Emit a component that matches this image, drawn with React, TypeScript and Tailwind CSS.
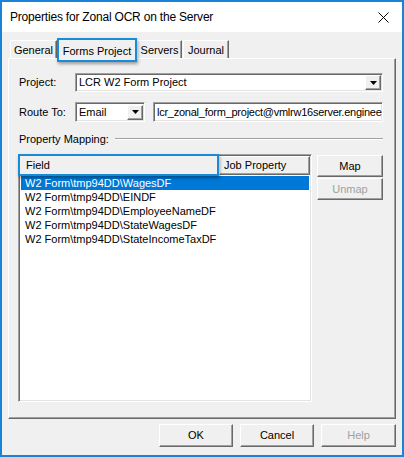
import React from "react";

const fields = [
  "W2 Form\\tmp94DD\\WagesDF",
  "W2 Form\\tmp94DD\\EINDF",
  "W2 Form\\tmp94DD\\EmployeeNameDF",
  "W2 Form\\tmp94DD\\StateWagesDF",
  "W2 Form\\tmp94DD\\StateIncomeTaxDF",
];

const sunken =
  "border border-t-[#a0a0a0] border-l-[#a0a0a0] border-b-white border-r-white shadow-[inset_1px_1px_0_#696969,inset_-1px_-1px_0_#e3e3e3]";
const raised =
  "border border-t-white border-l-white border-b-[#696969] border-r-[#696969] shadow-[inset_-1px_-1px_0_#a0a0a0]";

function Arrow() {
  return (
    <div className={`w-[16px] h-[15px] flex items-center justify-center bg-[#f0f0f0] ${raised}`}>
      <svg width="7" height="4" viewBox="0 0 7 4">
        <path d="M0 0H7L3.5 4Z" fill="#000" />
      </svg>
    </div>
  );
}

function Combo({ value, className }: { value: string; className: string }) {
  return (
    <div className={`bg-white flex items-center justify-between pl-[3px] pr-[1px] ${sunken} ${className}`}>
      <span className="whitespace-nowrap">{value}</span>
      <Arrow />
    </div>
  );
}

function Button({ label, disabled, className }: { label: string; disabled?: boolean; className: string }) {
  return (
    <div
      className={`flex items-center justify-center bg-[#f0f0f0] ${raised} ${className} ${
        disabled ? "text-[#a0a0a0]" : "text-black"
      }`}
    >
      {label}
    </div>
  );
}

function Tab({ label, className }: { label: string; className: string }) {
  return (
    <div
      className={`h-[18px] flex items-center justify-center pt-[1px] border-t border-l border-r border-t-white border-l-white border-r-[#696969] shadow-[inset_-1px_0_0_#a0a0a0] ${className}`}
    >
      {label}
    </div>
  );
}

export default function App() {
  return (
    <div className="w-[404px] h-[457px] flex flex-col border-2 border-[#1883d7] bg-[#f0f0f0] text-[11px] text-black font-['Liberation_Sans',Arial,sans-serif] overflow-hidden">
      {/* title bar */}
      <div className="h-[30px] shrink-0 bg-white flex items-center justify-between pl-[8px] pr-[13px] text-[12px]">
        <span className="tracking-[-0.2px]">Properties for Zonal OCR on the Server</span>
        <svg width="11" height="11" viewBox="0 0 11 11">
          <path d="M0.5 0.5L10.5 10.5M10.5 0.5L0.5 10.5" stroke="#000" strokeWidth="1" />
        </svg>
      </div>

      <div className="flex-1 px-[6px] pt-[6px] flex flex-col">
        {/* tabs */}
        <div className="h-[20px] flex items-end pl-[2px]">
          <Tab label="General" className="w-[47px]" />
          <div className="relative z-10 h-[24px] mb-[-4px] w-[80px] flex items-start justify-center pt-[3px] bg-[#f0f0f0] border-2 border-[#1a8bd6] shadow-[1px_2px_3px_rgba(0,0,0,0.35)]">
            Forms Project
          </div>
          <Tab label="Servers" className="w-[45px]" />
          <Tab label="Journal" className="w-[46px] ml-[1px]" />
        </div>

        {/* panel */}
        <div className="h-[361px] border border-t-white border-l-white border-b-[#696969] border-r-[#696969] shadow-[inset_-1px_-1px_0_#a0a0a0] pl-[9px] pr-[12px] flex flex-col">
          <div className="mt-[14px] h-[19px] flex items-center">
            <span className="w-[57px] pl-[1px]">Project:</span>
            <Combo value="LCR W2 Form Project" className="w-[308px] h-[19px]" />
          </div>

          <div className="mt-[10px] h-[20px] flex items-center">
            <span className="w-[57px] pl-[1px]">Route To:</span>
            <Combo value="Email" className="w-[70px] h-[20px]" />
            <div className={`ml-[8px] w-[230px] h-[20px] bg-white flex items-center pl-[3px] overflow-hidden ${sunken}`}>
              <span className="whitespace-nowrap tracking-[-0.25px]">lcr_zonal_form_project@vmlrw16server.enginee</span>
            </div>
          </div>

          <div className="mt-[11px] h-[12px] flex items-center">
            <span className="pl-[1px] whitespace-nowrap">Property Mapping:</span>
            <div className="flex-1 ml-[6px] h-[2px] border-t border-t-[#a0a0a0] border-b border-b-white" />
          </div>

          <div className="mt-[9px] flex gap-[5px]">
            <div className={`w-[296px] h-[248px] bg-white ${sunken} p-[1px] flex flex-col`}>
              <div className="h-[19px] flex shrink-0">
                <div className="relative z-10 -ml-[2px] -mt-[2px] w-[201px] h-[22px] pl-[6px] flex items-center bg-[#f0f0f0] border-2 border-[#1a8bd6] shadow-[1px_2px_3px_rgba(0,0,0,0.35)]">
                  Field
                </div>
                <div className={`flex-1 flex items-center pl-[4px] bg-[#f0f0f0] ${raised}`}>Job Property</div>
              </div>
              <div className="flex flex-col pt-[1px] pl-[1px] pr-[1px]">
                {fields.map((f, i) => (
                  <div
                    key={f}
                    className={`h-[14px] flex items-center pl-[4px] whitespace-nowrap ${
                      i === 0 ? "bg-[#0078d7] text-white" : ""
                    }`}
                  >
                    {f}
                  </div>
                ))}
              </div>
            </div>
            <div className="flex flex-col gap-[1px] pt-[1px]">
              <Button label="Map" className="w-[66px] h-[22px]" />
              <Button label="Unmap" disabled className="w-[66px] h-[22px]" />
            </div>
          </div>
        </div>

        {/* bottom buttons */}
        <div className="mt-[5px] flex justify-end gap-[7px]">
          <Button label="OK" className="w-[74px] h-[23px]" />
          <Button label="Cancel" className="w-[74px] h-[23px]" />
          <Button label="Help" disabled className="w-[75px] h-[23px]" />
        </div>
      </div>
    </div>
  );
}
